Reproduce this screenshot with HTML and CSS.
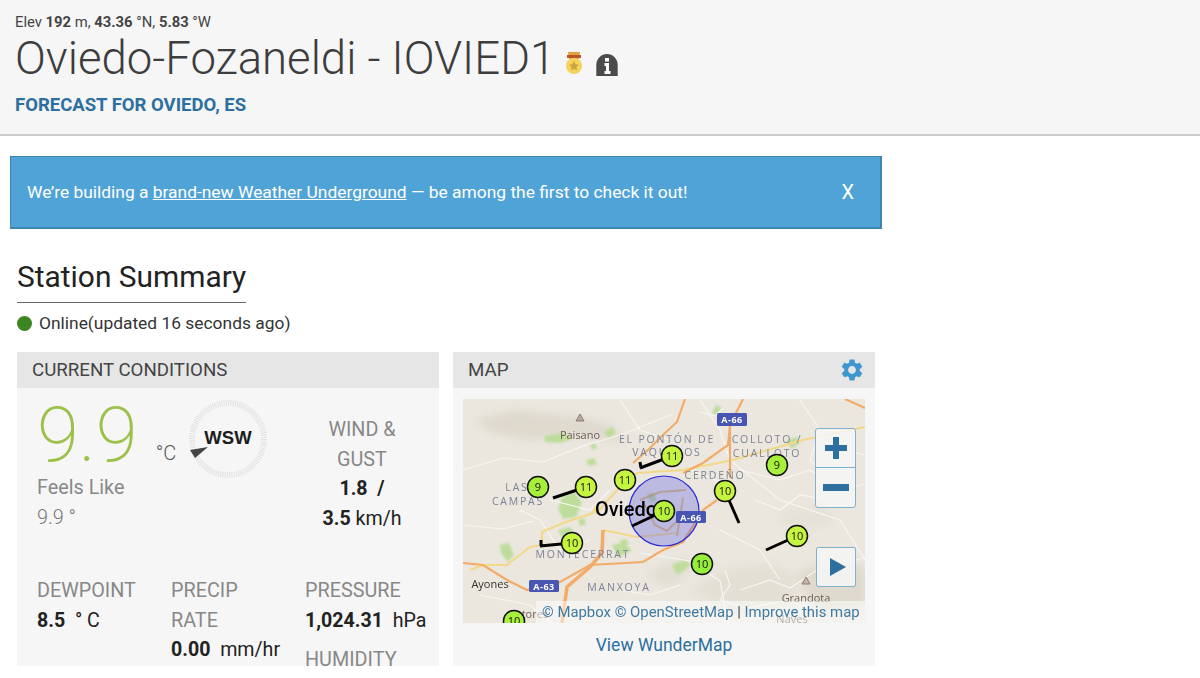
FILE: index.html
```html
<!DOCTYPE html>
<html>
  <head>
    <title>Oviedo-Fozaneldi - IOVIED1</title>
    <meta name="viewport" content="width=device-width, initial-scale=1" />
    <link rel="stylesheet" href="styles.css">
  </head>
  <body>
    <!-- station header -->
    <div class="station-header">
      <p class="station-meta">Elev <b>192</b> m, <b>43.36</b> °N, <b>5.83</b> °W</p>
      <div class="station-title">
        <h1>Oviedo-Fozaneldi - IOVIED1</h1>
        <svg class="medal" viewBox="0 0 18 25" width="18" height="25">
          <path d="M3 1h12l-1 7H4z" fill="#e0a23c" />
          <rect x="2" y="4" width="14" height="3" fill="#b9562c" />
          <circle cx="9" cy="15" r="8" fill="#f5d35c" />
          <path d="M9 10l1.500 3.300 3.500.4-2.600 2.400.7 3.500L9 17.800l-3.100 1.800.7-3.500L4 13.700l3.500-.4z" fill="#c9a441" />
        </svg>
        <svg class="info" viewBox="0 0 22 22" width="22" height="22">
          <path d="M11 0a10.700 10.700 0 0 1 10.700 10.700V22H.3V10.700A10.700 10.700 0 0 1 11 0z" fill="#4b4b4b" />
          <rect x="9" y="4" width="4" height="3.500" fill="#fff" />
          <path d="M8.500 9h4.500v8h1.500v3h-6v-3H10v-5H8.500z" fill="#fff" />
        </svg>
      </div>
      <a class="forecast-link" href="#">FORECAST FOR OVIEDO, ES</a>
    </div>

    <!-- banner -->
    <div class="banner">
      <p>We’re building a <a href="#">brand-new Weather Underground</a> — be among the first to check it out!</p>
      <span class="banner-close">X</span>
    </div>

    <div class="summary">
      <h2 class="summary-title">Station Summary</h2>
      <p class="status"><span class="status-dot"></span>Online(updated 16 seconds ago)</p>

      <div class="cards">
        <!-- current conditions -->
        <div class="card">
          <div class="card-head">CURRENT CONDITIONS</div>
          <div class="cond-body">
            <div class="cond-top">
              <div class="temp-col">
                <div class="temp"><span class="temp-value">9.9</span><span class="temp-unit">°C</span></div>
                <p class="feels-label">Feels Like</p>
                <p class="feels-value">9.9 °</p>
              </div>
              <svg class="compass" viewBox="0 0 84 84" width="84" height="84">
                <circle cx="42" cy="42" r="36" fill="none" stroke="#e0e0e0" stroke-width="6" stroke-dasharray="1 1.260" />
                <polygon points="4,53 22,50 9,61" fill="#444" />
                <text x="42" y="47" text-anchor="middle" class="compass-text">WSW</text>
              </svg>
              <div class="wind-col">
                <p class="label">WIND &amp;</p>
                <p class="label">GUST</p>
                <p class="value"><b>1.8</b>&nbsp; <b>/</b></p>
                <p class="value"><b>3.5</b> km/h</p>
              </div>
            </div>
            <div class="cond-grid">
              <div>
                <p class="label">DEWPOINT</p>
                <p class="value"><b>8.5</b>&nbsp; ° C</p>
              </div>
              <div>
                <p class="label">PRECIP</p>
                <p class="label">RATE</p>
                <p class="value"><b>0.00</b>&nbsp; mm/hr</p>
              </div>
              <div>
                <p class="label">PRESSURE</p>
                <p class="value"><b>1,024.31</b>&nbsp; hPa</p>
                <p class="label humidity">HUMIDITY</p>
              </div>
            </div>
          </div>
        </div>

        <!-- map -->
        <div class="card">
          <div class="card-head card-head-map">
            <span>MAP</span>
            <svg viewBox="0 0 24 24" width="26" height="26">
              <path fill="#3f97d0" d="M19.140 12.940c.04-.3.06-.61.06-.94 0-.32-.02-.64-.07-.94l2.030-1.580a.49.49 0 0 0 .12-.61l-1.920-3.320a.488.488 0 0 0-.59-.22l-2.390.96c-.5-.38-1.030-.7-1.620-.94l-.36-2.540a.484.484 0 0 0-.48-.41h-3.840c-.24 0-.43.17-.47.41l-.36 2.540c-.59.24-1.130.57-1.620.94l-2.390-.96c-.22-.08-.47 0-.59.22L2.740 8.870c-.12.21-.08.47.12.61l2.030 1.580c-.05.3-.09.63-.09.94s.02.64.07.94l-2.030 1.580a.49.49 0 0 0-.12.61l1.920 3.320c.12.22.37.29.59.22l2.390-.96c.5.38 1.030.7 1.620.94l.36 2.540c.05.24.24.41.48.41h3.840c.24 0 .44-.17.47-.41l.36-2.540c.59-.24 1.130-.56 1.620-.94l2.390.96c.22.08.47 0 .59-.22l1.920-3.320c.12-.22.07-.47-.12-.61l-2.010-1.580zM12 15.600c-1.980 0-3.600-1.620-3.600-3.600s1.620-3.600 3.600-3.600 3.600 1.620 3.600 3.600-1.620 3.600-3.600 3.600z" />
            </svg>
          </div>
          <div class="map-body">
            <div class="map">
              <svg class="map-art" viewBox="463 399 402 224" width="402" height="224">
                <defs>
                  <filter id="soft"><feGaussianBlur stdDeviation="4" /></filter>
                  <filter id="soft-small"><feGaussianBlur stdDeviation="0.8" /></filter>
                </defs>
                <rect x="463" y="399" width="402" height="224" fill="#ebe7df" />
                <!-- hills -->
                <g fill="#d9d4c6" fill-opacity=".7" filter="url(#soft)">
                  <path d="M475 420l40-10 55 6 40 8 15 18-45-6-50 4-40-8z" />
                  <path d="M690 590l40-22 45-4 25 16-10 26-55 8z" opacity=".6" />
                  <path d="M795 575l35-16 35 8v42l-45 4z" />
                  <path d="M645 575l35-18 18 8-28 22z" opacity=".7" />
                  <path d="M780 510l40-6 20 14-30 14-30-8z" opacity=".4" />
                </g>
                <!-- parks -->
                <g fill="#bedd9c" filter="url(#soft-small)">
                  <path d="M545 436l18-3 10 5-12 5-16-1z" />
                  <path d="M562 497l12-5 8 10-6 15-13 2-5-10z" />
                  <path d="M500 545l9-2 5 12-6 7-7-9z" />
                  <path d="M558 530l12-3 6 9-11 6z" />
                  <path d="M612 545l12-3 8 9-14 6z" />
                  <path d="M672 565l14-5 4 6-13 9z" />
                  <path d="M604 432l8-5 4 6-8 5z" />
                  <path d="M716 405l6 3-5 8-5-3z" />
                  <path d="M586 460l8-2 3 6-8 2z" />
                  <path d="M590 445l5-2 2 5-5 2z" />
                  <path d="M787 440l10-3 3 6-9 6z" />
                  <path d="M620 540l6-1 3 5-7 2z" />
                  <path d="M578 520l6-2 2 6-6 2z" />
                  <path d="M647 495l6-3 4 8-6 3z" />
                </g>
                <!-- minor streets -->
                <g fill="none" stroke="#f8f6f2" stroke-width="1.200">
                  <path d="M463 470l40-12 40 4 40-16 40-12 50-20" />
                  <path d="M700 400l20 30 10 30 50 40 60 20 25 40" />
                  <path d="M640 553l50 8 30 20 8 42" />
                  <path d="M463 525l40 4 30-8" />
                  <path d="M740 470l40 10 30-10 30 20 25-6" />
                  <path d="M800 400l20 30-10 30 30 30" />
                  <path d="M740 590l30-10 20 8 30-20 45-10" />
                  <path d="M720 530l40 20 20 30" />
                  <path d="M620 400l20 30 30 10" />
                  <path d="M480 595l50 10 20 18" />
                  <path d="M690 470l30 12 20-10" />
                  <path d="M610 490l-20 20-40-10" />
                  <path d="M520 510l20 10 20 30 30-10" />
                  <path d="M755 500l25 10 20-15 30 5" />
                  <path d="M725 570l5 15-10 15 25 8 30-5" />
                  <path d="M620 590l30 5 30-10" />
                  <path d="M700 412l15 4 8-8" />
                  <path d="M830 430l15 20 20 5" />
                </g>
                <!-- yellow roads -->
                <g fill="none" stroke="#f2d98a" stroke-width="2.200">
                  <path d="M470 570l13-5h24l23-18 12-2v-13l21-9 30-10 2-5 2 5 20-23 20-17 46-3 50-10 70-20 62-13" />
                  <path d="M603 530l34 7 40-4" />
                </g>
                <!-- orange roads -->
                <g fill="none" stroke="#f3ab68" stroke-width="2.200">
                  <path d="M685 399l-8 23-14 13-13 13-17 15" />
                  <path d="M743 399l-13 26-2 20-25 18-20 10" />
                  <path d="M730 425v53" />
                  <path d="M845 399l20 9" />
                  <path d="M463 563l20 2 24 15 20 10 33-8 30-17 53-3 20-12 20-8 20-32 14-10" />
                  <path d="M603 530l-1 23-12 14-23 20-5 36" stroke-width="3.500" />
                </g>
                <!-- radius circle -->
                <circle cx="664" cy="511" r="35" fill="#5a5ae6" fill-opacity=".32" stroke="#2727d2" stroke-width="1.200" />
                <path d="M640 500l20-8 26-2M645 505l10 20 12 6 10-10M683 498l-6 38" fill="none" stroke="#b08e6e" stroke-width="2" opacity=".6" />
                <!-- road shields -->
                <g class="shield-text">
                  <rect x="717" y="413" width="30" height="13" rx="1.500" fill="#4855b2" />
                  <text x="732" y="423">A-66</text>
                  <rect x="676" y="511" width="30" height="12" rx="1.500" fill="#4855b2" />
                  <text x="691" y="521">A-66</text>
                  <rect x="529" y="580" width="30" height="12" rx="1.500" fill="#4855b2" />
                  <text x="544" y="590">A-63</text>
                </g>
                <!-- places -->
                <polygon points="580,414 584,421 576,421" fill="#b9ab9f" stroke="#7d6a60" stroke-width=".8" />
                <polygon points="806,577 810,584 802,584" fill="#c9b3a8" stroke="#7d6a60" stroke-width=".8" />
                <text x="580" y="439" class="place">Paisano</text>
                <text x="806" y="602" class="place">Grandota</text>
                <text x="490" y="588" class="place place-dark">Ayones</text>
                <text x="529" y="618" class="place">Latores</text>
                <text x="792" y="623" class="place">Naves</text>
                <text x="667" y="443" class="district">EL PONTÓN DE</text>
                <text x="667" y="456" class="district">VAQUEROS</text>
                <text x="767" y="443" class="district">COLLOTO /</text>
                <text x="767" y="457" class="district">CUALLOTO</text>
                <text x="715" y="479" class="district">CERDEÑO</text>
                <text x="517" y="491" class="district">LAS</text>
                <text x="518" y="505" class="district">CAMPAS</text>
                <text x="583" y="558" class="district">MONTECERRAT</text>
                <text x="619" y="591" class="district">MANXOYA</text>
                <text x="626" y="516" class="city">Oviedo</text>
                <!-- wind barbs -->
                <g stroke="#000" stroke-width="3" fill="none">
                  <path d="M672 456l-32 12M641 468l-1-6" />
                  <path d="M586 487l-33 11" />
                  <path d="M725 491l14 32" />
                  <path d="M664 511l-32 15" />
                  <path d="M572 543l-32 3M541 546v-6" />
                  <path d="M797 536l-31 14" />
                </g>
                <!-- station pins -->
                <g stroke="#111" stroke-width="1.500" class="pin-text">
                  <circle cx="672" cy="456" r="10.500" fill="#c6f53f" />
                  <circle cx="625" cy="480" r="10.500" fill="#c6f53f" />
                  <circle cx="586" cy="487" r="10.500" fill="#c6f53f" />
                  <circle cx="538" cy="487" r="10.500" fill="#a6f03c" />
                  <circle cx="777" cy="465" r="10.500" fill="#a6f03c" />
                  <circle cx="725" cy="491" r="10.500" fill="#c6f53f" />
                  <circle cx="664" cy="511" r="10.500" fill="#b6f23e" />
                  <circle cx="572" cy="543" r="10.500" fill="#c6f53f" />
                  <circle cx="797" cy="536" r="10.500" fill="#c6f53f" />
                  <circle cx="702" cy="564" r="10.500" fill="#96ee3a" />
                  <circle cx="514" cy="621" r="10.500" fill="#a6f03c" />
                  <text x="672" y="460">11</text>
                  <text x="625" y="484">11</text>
                  <text x="586" y="491">11</text>
                  <text x="538" y="491">9</text>
                  <text x="777" y="469">9</text>
                  <text x="725" y="495">10</text>
                  <text x="664" y="515">10</text>
                  <text x="572" y="547">10</text>
                  <text x="797" y="540">10</text>
                  <text x="702" y="568">10</text>
                  <text x="514" y="625">10</text>
                </g>
              </svg>
              <div class="map-zoom">
                <button class="map-btn map-btn-split">
                  <svg viewBox="0 0 24 24" width="24" height="24"><path d="M9 1h6v8h8v6h-8v8H9v-8H1V9h8z" fill="#2d6f9f" /></svg>
                </button>
                <button class="map-btn">
                  <svg viewBox="0 0 26 8" width="26" height="8"><rect width="26" height="7" fill="#2d6f9f" /></svg>
                </button>
              </div>
              <button class="map-play">
                <svg viewBox="0 0 18 20" width="18" height="20"><polygon points="1,1 17,10 1,19" fill="#2d6f9f" /></svg>
              </button>
              <div class="map-credit">© Mapbox © OpenStreetMap <span>|</span> Improve this map</div>
            </div>
            <a class="map-link" href="#">View WunderMap</a>
          </div>
        </div>
      </div>
    </div>
  </body>
</html>
```

FILE: styles.css
```css
* {
  margin: 0;
  padding: 0;
  box-sizing: border-box;
}

body {
  background-color: #fff;
  color: #222;
  font-family: Roboto, "Liberation Sans", sans-serif;
  overflow: hidden;
}

a {
  color: inherit;
  text-decoration: none;
}

/* Header */
.station-header {
  height: 136px;
  padding: 14px 15px 0;
  background-color: #f6f6f6;
  border-bottom: 2px solid #ccc;
}

.station-meta {
  font-size: 14.800px;
  line-height: 16px;
  color: #444;
}

.station-title {
  display: flex;
  align-items: flex-end;
  height: 44px;
  margin-top: 7px;
}

.station-title h1 {
  font-size: 45.500px;
  font-weight: 300;
  line-height: 44px;
  color: #3d3d3d;
  white-space: nowrap;
}

.medal {
  margin: 0 0 5px 10px;
}

.info {
  margin: 0 0 5px 13px;
}

.forecast-link {
  display: block;
  margin-top: 13px;
  font-size: 18.500px;
  font-weight: 700;
  line-height: 22px;
  color: #2d6f9f;
}

/* Banner */
.banner {
  display: flex;
  align-items: center;
  justify-content: space-between;
  width: 872px;
  height: 73px;
  margin: 20px 0 0 10px;
  padding: 0 26px 0 16px;
  background-color: #4fa3d6;
  border: 1px solid #3f85b2;
  border-bottom-width: 2px;
  border-right-width: 2px;
  font-size: 17.400px;
  color: #fff;
}

.banner a {
  text-decoration: underline;
}

.banner-close {
  font-size: 20px;
}

/* Summary */
.summary {
  padding: 0 0 0 17px;
}

.summary-title {
  display: inline-block;
  margin-top: 30px;
  padding-bottom: 8px;
  border-bottom: 1px solid #666;
  font-size: 29.900px;
  font-weight: 400;
  line-height: 35px;
  color: #222;
}

.status {
  display: flex;
  align-items: center;
  margin-top: 9px;
  font-size: 17.400px;
  line-height: 22px;
  color: #333;
}

.status-dot {
  width: 15px;
  height: 15px;
  margin-right: 7px;
  border-radius: 50%;
  background-color: #3c8522;
}

.cards {
  display: flex;
  gap: 14px;
  margin-top: 18px;
}

.card {
  width: 422px;
  height: 314px;
  overflow: hidden;
  background-color: #f6f6f6;
}

.card-head {
  height: 36px;
  padding-left: 15px;
  background-color: #e6e6e6;
  font-size: 18.700px;
  line-height: 36px;
  color: #444;
}

.card-head-map {
  display: flex;
  align-items: center;
  justify-content: space-between;
  padding-right: 10px;
}

/* Current conditions */
.cond-body {
  padding: 0 0 0 20px;
}

.cond-top {
  display: flex;
  height: 187px;
}

.temp-col {
  width: 149px;
  padding-top: 9px;
}

.temp {
  display: flex;
  align-items: flex-end;
  height: 77px;
  white-space: nowrap;
}

.temp-value {
  font-size: 76px;
  font-weight: 200;
  line-height: 77px;
  color: #9bc14a;
}

.temp-unit {
  margin: 0 0 10px 18px;
  font-size: 20px;
  font-weight: 300;
  line-height: 22px;
  color: #555;
}

.feels-label {
  margin-top: 1px;
  font-size: 19.800px;
  line-height: 26px;
  color: #888;
}

.feels-value {
  margin-top: 4px;
  font-size: 19.800px;
  font-weight: 300;
  line-height: 26px;
  color: #777;
}

.compass {
  margin: 9px 0 0 0;
}

.compass-text {
  font-family: "Liberation Sans", sans-serif;
  font-size: 18.500px;
  font-weight: 700;
  fill: #1c1c1c;
}

.wind-col {
  width: 116px;
  margin-left: 34px;
  padding-top: 27px;
  text-align: center;
}

.label {
  font-size: 19.800px;
  line-height: 29.500px;
  color: #888;
  white-space: nowrap;
}

.value {
  font-size: 19.600px;
  line-height: 29.500px;
  color: #222;
  white-space: nowrap;
}

.cond-grid {
  display: grid;
  grid-template-columns: 134px 134px 1fr;
  padding-top: 1px;
}

.humidity {
  margin-top: 10px;
}

/* Map */
.map-body {
  padding: 11px 10px 0;
  text-align: center;
}

.map {
  position: relative;
  width: 402px;
  height: 224px;
  overflow: hidden;
}

.map-art {
  display: block;
}

.map-art text {
  font-family: "Open Sans", sans-serif;
}

.shield-text text {
  font-size: 9px;
  font-weight: 700;
  letter-spacing: 0.5px;
  text-anchor: middle;
  fill: #fff;
}

.place {
  font-size: 11px;
  text-anchor: middle;
  fill: #6b5d55;
}

.place-dark {
  fill: #333;
}

.district {
  font-size: 10.500px;
  letter-spacing: 1.800px;
  text-anchor: middle;
  fill: #7d8296;
}

.map-art .city {
  font-family: Roboto, sans-serif;
  font-size: 20px;
  font-weight: 500;
  text-anchor: middle;
  fill: #000;
}

.pin-text text {
  font-size: 11px;
  stroke: none;
  text-anchor: middle;
  fill: #111;
}

.map-zoom {
  position: absolute;
  top: 29px;
  left: 352px;
  width: 41px;
  height: 80px;
  background-color: rgba(246, 246, 246, 0.85);
  border: 1px solid #7fb0cc;
  border-radius: 3px;
}

.map-btn {
  display: flex;
  align-items: center;
  justify-content: center;
  width: 39px;
  height: 39px;
  border: 0;
  background: none;
}

.map-btn-split {
  border-bottom: 1px solid #7fb0cc;
}

.map-play {
  position: absolute;
  top: 148px;
  left: 353px;
  display: flex;
  align-items: center;
  justify-content: center;
  width: 40px;
  height: 40px;
  padding-left: 3px;
  background-color: rgba(246, 246, 246, 0.85);
  border: 1px solid #7fb0cc;
  border-radius: 2px;
}

.map-credit {
  position: absolute;
  right: 0;
  bottom: 0;
  width: 329px;
  height: 22px;
  padding-left: 6px;
  background-color: rgba(255, 255, 255, 0.5);
  font-size: 14.900px;
  line-height: 22px;
  text-align: left;
  color: #3f7aa3;
  white-space: nowrap;
}

.map-credit span {
  color: #444;
}

.map-link {
  display: block;
  margin-top: 11px;
  font-size: 17.500px;
  line-height: 22px;
  color: #2d6f9f;
}
```
